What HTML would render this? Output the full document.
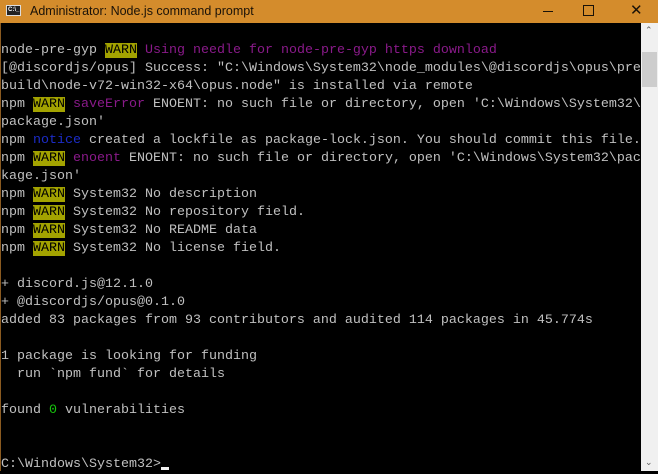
<!DOCTYPE html>
<html><head><style>
html,body{margin:0;padding:0;background:#000;width:658px;height:471px;overflow:hidden}
#title{position:absolute;left:0;top:0;width:658px;height:23px;background:#d48c2c;}
#title .t{position:absolute;left:30px;top:4px;font:12.5px "Liberation Sans",sans-serif;color:#1a1208}
#icon{position:absolute;left:6px;top:5px;width:15px;height:11px;background:#222;border:1px solid #ddd;box-sizing:border-box;color:#fff;font:bold 6px "Liberation Sans",sans-serif;line-height:9px;padding-left:1px}
.btn{position:absolute;top:0;color:#1a1208;font:15px "Liberation Sans",sans-serif}
#term{position:absolute;left:1px;top:42px;width:640px;font-family:"Liberation Mono",monospace;font-size:13.33px;line-height:18px;color:#c0c0c0;white-space:pre}
.w{background:#a3a300;color:#000}
.m{color:#8a1a8a}
.b{color:#1c2cc8}
.g{color:#16c60c}
#sb{position:absolute;left:641px;top:23px;width:17px;height:448px;background:#f0f0f0}
#thumb{position:absolute;left:642px;top:52px;width:15px;height:35px;background:#cdcdcd}
.cur{display:inline-block;width:8px;height:3px;background:#f0f0f0;vertical-align:-3px}
#lb{position:absolute;left:0;top:23px;width:1px;height:448px;background:#8a5a20}
</style></head><body>
<div id="title"><div id="icon">C:\_</div><div class="t">Administrator: Node.js command prompt</div>
<div style="position:absolute;left:543px;top:11px;width:10px;height:1px;background:#1a1208"></div>
<div style="position:absolute;left:583px;top:5px;width:9px;height:9px;border:1px solid #1a1208"></div>
<div class="btn" style="left:630px;top:1px;font-size:15px">&#10005;</div>
</div>
<div id="lb"></div>
<div id="sb"></div><div id="thumb"></div>
<div style="position:absolute;left:645px;top:26px;color:#606060;font:9px 'DejaVu Sans',sans-serif">&#8963;</div>
<div style="position:absolute;left:645px;top:458px;color:#606060;font:9px 'DejaVu Sans',sans-serif">&#8964;</div>
<div id="term">node-pre-gyp <span class="w">WARN</span> <span class="m">Using needle for node-pre-gyp https download</span>
[@discordjs/opus] Success: "C:\Windows\System32\node_modules\@discordjs\opus\pre
build\node-v72-win32-x64\opus.node" is installed via remote
npm <span class="w">WARN</span> <span class="m">saveError</span> ENOENT: no such file or directory, open 'C:\Windows\System32\
package.json'
npm <span class="b">notice</span> created a lockfile as package-lock.json. You should commit this file.
npm <span class="w">WARN</span> <span class="m">enoent</span> ENOENT: no such file or directory, open 'C:\Windows\System32\pac
kage.json'
npm <span class="w">WARN</span> System32 No description
npm <span class="w">WARN</span> System32 No repository field.
npm <span class="w">WARN</span> System32 No README data
npm <span class="w">WARN</span> System32 No license field.

+ discord.js@12.1.0
+ @discordjs/opus@0.1.0
added 83 packages from 93 contributors and audited 114 packages in 45.774s

1 package is looking for funding
  run `npm fund` for details

found <span class="g">0</span> vulnerabilities


C:\Windows\System32&gt;<span class="cur"></span></div>
</body></html>
